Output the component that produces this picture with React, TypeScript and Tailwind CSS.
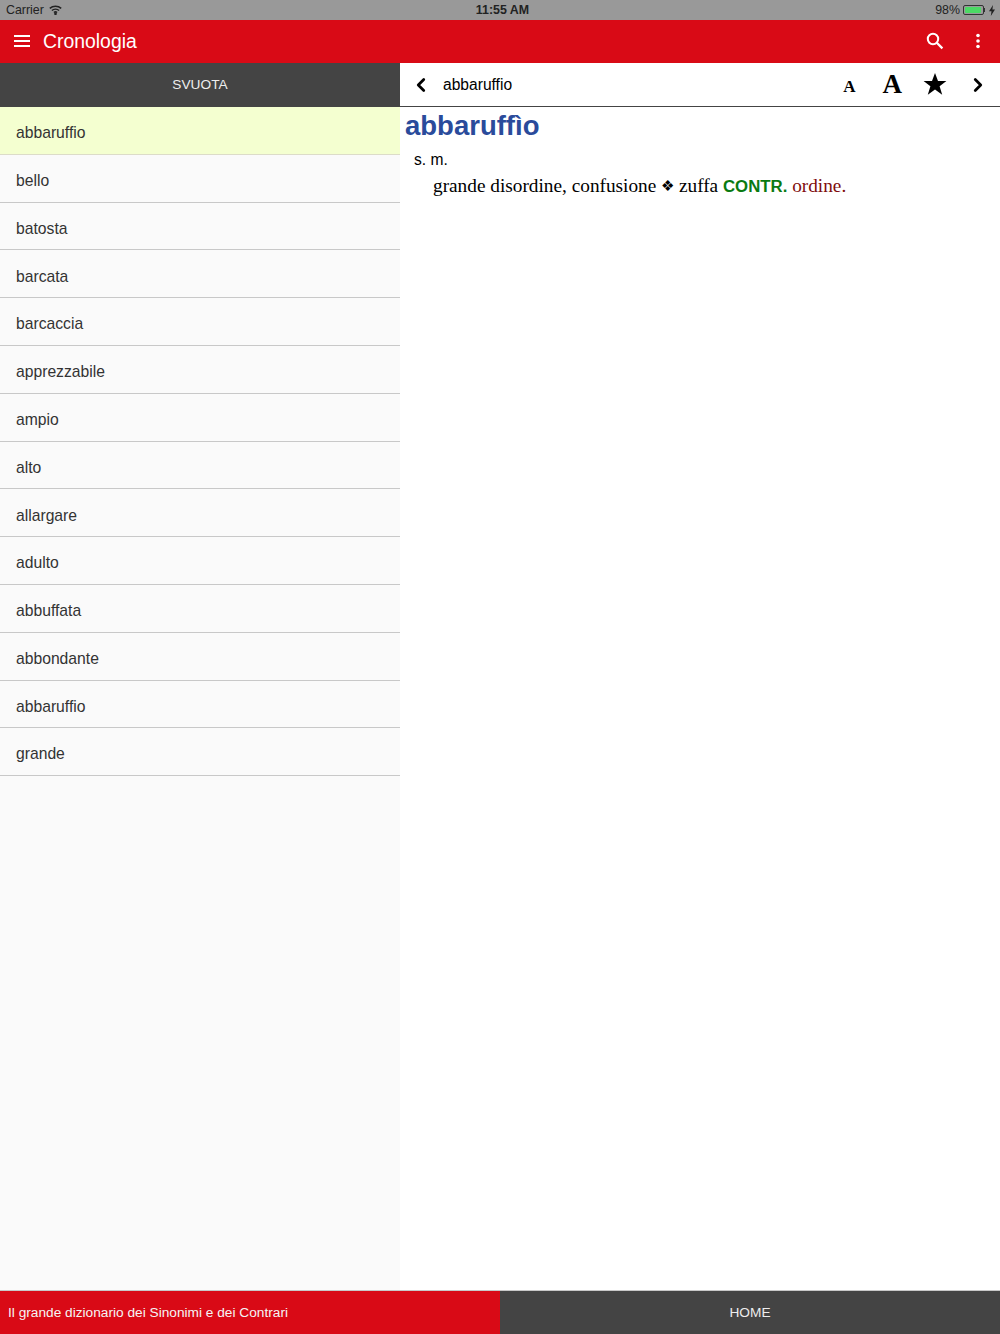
import React from "react";
import { ChevronLeft, ChevronRight } from "lucide-react";

const items = ["abbaruffio","bello","batosta","barcata","barcaccia","apprezzabile","ampio","alto","allargare","adulto","abbuffata","abbondante","abbaruffio","grande"];

export default function App() {
  return (
    <div className="w-[1000px] h-[1334px] flex flex-col overflow-hidden bg-white font-['Liberation_Sans',sans-serif]">
      <div className="h-5 bg-[#999999] flex items-center justify-between pl-[6px] pr-[5px] pt-[1px] text-[12.4px] text-[#222]">
        <div className="flex items-center gap-[5px] w-[300px]">
          <span>Carrier</span>
          <svg width="13" height="10" viewBox="0 0 13 10" fill="none" stroke="#222" strokeWidth="1.5" className="-mt-[1px]">
            <path d="M0.8 3.4C4 0.4 9 0.4 12.2 3.4" />
            <path d="M2.9 5.5C4.9 3.7 8.1 3.7 10.1 5.5" />
            <path d="M4.9 7.5C5.8 6.8 7.2 6.8 8.1 7.5" />
            <circle cx="6.5" cy="8.8" r="0.6" fill="#222" />
          </svg>
        </div>
        <span className="font-bold ml-[4px]">11:55 AM</span>
        <div className="flex items-center justify-end w-[300px]">
          <span className="text-[12.4px]">98%</span>
          <div className="ml-[3px] w-[21px] h-[10px] border border-[#333] rounded-[2px] p-[1px]"><div className="h-full w-[96%] bg-[#4cd964] rounded-[1px]" /></div>
          <div className="w-[1px] h-[4px] bg-[#333] mr-[4px]" />
          <svg width="6" height="11" viewBox="0 0 6 11" fill="#222"><path d="M4 0L0 6.2H2.5L1.8 11L6 4.6H3.4Z" /></svg>
        </div>
      </div>
      <div className="h-[43px] bg-[#d90a16] flex items-center text-white pl-[14px]">
        <div className="w-4 flex flex-col gap-[3px] -mt-[1px]">
          <div className="h-[2px] bg-white" />
          <div className="h-[2px] bg-white" />
          <div className="h-[2px] bg-white" />
        </div>
        <span className="ml-[13px] text-[19.4px]">Cronologia</span>
        <div className="ml-auto flex items-center gap-[24px] pr-[12px]">
          <svg width="18" height="18" viewBox="0 0 18 18" fill="none" stroke="white" strokeWidth="2" className="-mt-[2px]">
            <circle cx="7" cy="7" r="5.2" />
            <path d="M10.8 10.8L16.4 16.4" strokeWidth="2.3" />
          </svg>
          <svg width="20" height="20" viewBox="0 0 20 20" fill="white" className="-mt-[1px]"><circle cx="10" cy="4.5" r="1.8"/><circle cx="10" cy="10" r="1.8"/><circle cx="10" cy="15.5" r="1.8"/></svg>
        </div>
      </div>
      <div className="flex-1 flex min-h-0">
        <div className="w-[400px] bg-[#fafafa] flex flex-col">
          <div className="h-[44px] shrink-0 bg-[#444444] text-[#eeeeee] text-[13.7px] flex items-center justify-center">SVUOTA</div>
          {items.map((t, i) => (
            <div key={i} className={`h-[47.8px] shrink-0 border-b flex items-center pl-4 pt-[5px] text-[15.7px] text-[#333] ${i === 0 ? "bg-[#f4ffd0] border-[#dcdcc8]" : "border-[#c8c8c8]"}`}>{t}</div>
          ))}
        </div>
        <div className="flex-1 flex flex-col">
          <div className="h-[44px] shrink-0 border-b border-[#444] flex items-center text-black">
            <ChevronLeft size={22} strokeWidth={3} className="ml-[10px]" />
            <span className="ml-[11px] text-[15.6px]">abbaruffio</span>
            <div className="ml-auto flex items-center pr-[11px]">
              <span className="font-['Liberation_Serif',serif] font-bold text-[17px] mr-[27px] mt-[5px]">A</span>
              <span className="font-['Liberation_Serif',serif] font-bold text-[27px] mr-[21px] -mt-[1px]">A</span>
              <svg width="24" height="24" viewBox="0 0 24 24" fill="black" className="mr-[20px] -mt-[1px]"><path d="M12 1L15 9H23.4L16.6 14.2L19.2 22.8L12 17.6L4.8 22.8L7.4 14.2L0.6 9H9Z" /></svg>
              <ChevronRight size={22} strokeWidth={3} />
            </div>
          </div>
          <div className="pl-[5px]">
            <div className="text-[27.5px] font-bold text-[#2a4b9b] leading-[38px]">abbaruffìo</div>
            <div className="pl-[9px] text-[15.6px] leading-[20px] mt-[5px] text-black">s. m.</div>
            <div className="pl-[28px] mt-[3px] leading-[26px] font-['Liberation_Serif',serif] text-[19.3px] text-black">grande disordine, confusione <span className="text-[15px] align-[1px]">❖</span> zuffa <span className="font-['Liberation_Sans',sans-serif] font-bold text-[#0a7a12] text-[16.8px]">CONTR.</span> <span className="text-[#800d0d]">ordine.</span></div>
          </div>
        </div>
      </div>
      <div className="h-[44px] border-t border-[#c8c8c8] flex text-[13.7px] text-white">
        <div className="w-[500px] bg-[#d90a16] flex items-center pl-2 pt-[2px] text-[#f5f5f5]">Il grande dizionario dei Sinonimi e dei Contrari</div>
        <div className="flex-1 bg-[#444444] flex items-center justify-center pt-[2px] text-[#eeeeee]">HOME</div>
      </div>
    </div>
  );
}
